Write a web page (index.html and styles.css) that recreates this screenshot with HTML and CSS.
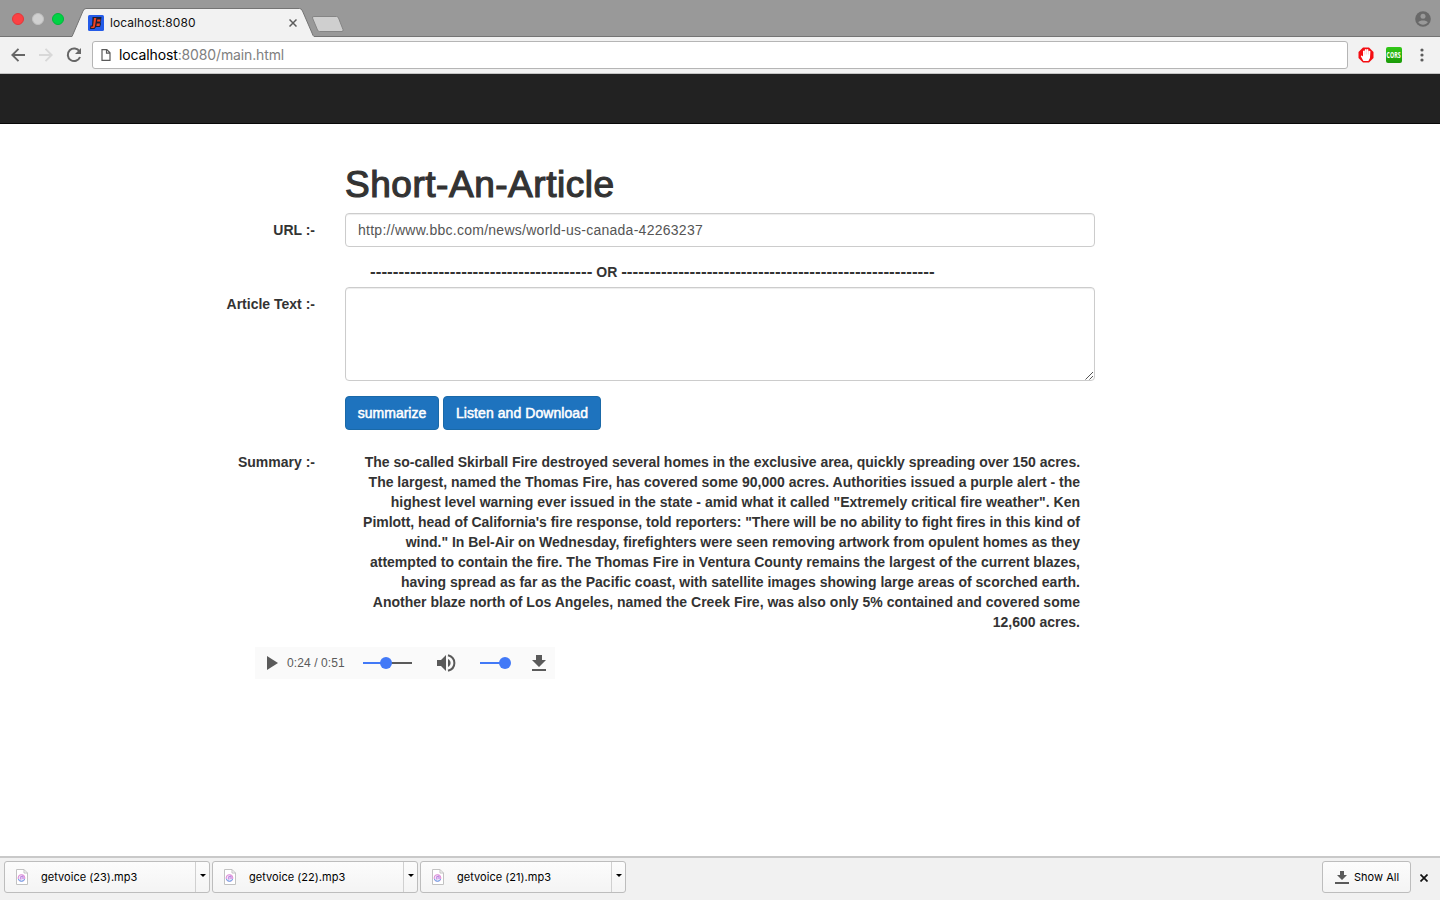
FILE: index.html
```
<!DOCTYPE html>
<html lang="en">
<head>
<meta charset="utf-8">
<title>localhost:8080</title>
<link rel="stylesheet" href="styles.css">
</head>
<body>
<header class="tabstrip">
  <div class="lights"><i class="light red"></i><i class="light gray"></i><i class="light green"></i></div>
  <div class="tab">
    <svg class="tab-shape" width="244" height="29" viewBox="0 0 244 29"><path d="M0 28.500 L2 24 11 3 Q12 .5 14 .5 H227.500 Q229.500 .5 230.500 3 L240 25 Q241 28 242 28.500 V29 H0Z" fill="#f2f2f2"/><path d="M0 28.500 L2 24 11 3 Q12 .5 14 .5 H227.500 Q229.500 .5 230.500 3 L240 25 Q241 28 242 28.500" fill="none" stroke="#747474"/></svg>
    <svg class="favicon" width="16" height="16" viewBox="0 0 16 16"><rect width="16" height="16" rx="1.500" fill="#245be8"/><path d="M4.500 2H13.500L13 6 12.500 7 13 9 12 12H8L6.500 14H2L2.500 10.500H4Z" fill="#1c2036"/><path d="M6 3H8.300L6.800 12 6 13H3L3.500 11.500H5ZM9.300 4.500H12.500L12.200 6.500H9ZM8.800 8.500H12L11.500 11H8.400Z" fill="#f5411f"/></svg>
    <span class="tab-title">localhost:8080</span>
    <svg class="tab-close" width="8" height="8" viewBox="0 0 8 8"><path d="M.5.5 7.500 7.500M7.500.5.5 7.500" stroke="#5c5c5c" stroke-width="1.500"/></svg>
  </div>
  <svg class="newtab" width="34" height="17" viewBox="0 0 34 17"><path d="M3 .5H25.500Q27 .5 27.500 2L32 13.500Q32.500 15.500 31 15.500H8.500Q7 15.500 6.500 14L1.500 2Q1 .5 3 .5Z" fill="#cfcfcf" stroke="#858585"/></svg>
  <svg class="profile" width="16" height="16" viewBox="0 0 16 16"><circle cx="8" cy="8" r="7.800" fill="#696969"/><circle cx="8" cy="5.200" r="2.500" fill="#999"/><path d="M3.200 11.300C4.500 8.800 11.500 8.800 12.800 11.300 10.800 14.600 5.200 14.600 3.200 11.300Z" fill="#999"/></svg>
</header>
<div class="toolbar">
  <svg class="nav" width="14" height="14" viewBox="0 0 14 14"><path d="M14 7H1.500M7.500.8 1.300 7 7.500 13.200" fill="none" stroke="#666" stroke-width="1.900"/></svg>
  <svg class="nav" width="14" height="14" viewBox="0 0 14 14"><path d="M0 7H12.500M6.500.8 12.700 7 6.500 13.200" fill="none" stroke="#d8d8d8" stroke-width="1.900"/></svg>
  <svg class="nav" width="16" height="16" viewBox="0 0 16 16"><path d="M13.500 4.500A6.300 6.300 0 1 0 14 10" fill="none" stroke="#666" stroke-width="2"/><path d="M15 1V7H9Z" fill="#666"/></svg>
  <div class="omnibox">
    <svg width="10" height="12" viewBox="0 0 10 12"><path d="M1 .6H5.800L9 3.800V11.400H1ZM5.500.6V4.100H9" fill="none" stroke="#5a5a5a" stroke-width="1.200"/></svg>
    <span class="address">localhost<span class="rest">:8080/main.html</span></span>
  </div>
  <svg class="ext adblock" width="16" height="16" viewBox="0 0 16 16"><path d="M5 .5H11L15.500 5V11L11 15.500H5L.5 11V5Z" fill="#f40d12"/><path d="M5.400 14 2.800 9.200Q3.300 8 4.600 9L5 9.800V4Q5.900 2.800 6.700 4L6.900 2.500Q7.600 1.300 8.400 2.500L8.900 2.500Q9.800 1.600 10.400 2.800V4.200L10.900 4Q11.900 3.300 12.400 4.300L12 11 10.400 14Z" fill="#fff"/><path d="M6.800 4V7.500M8.600 3V7.500M10.500 4V7.500" stroke="#f9a0a2" stroke-width=".4"/></svg>
  <span class="ext cors"><span class="cors-text">CORS</span></span>
  <svg class="dots" width="4" height="14" viewBox="0 0 4 14"><g fill="#5c5c5c"><circle cx="2" cy="2" r="1.600"/><circle cx="2" cy="7" r="1.600"/><circle cx="2" cy="12" r="1.600"/></g></svg>
</div>
<nav class="navbar"></nav>
<main class="container">
  <h1>Short-An-Article</h1>
  <div class="row"><label>URL :-</label><div class="control input">http://www.bbc.com/news/world-us-canada-42263237</div></div>
  <div class="or"><span class="dash">---------------------------------------</span> OR <span class="dash">-------------------------------------------------------</span></div>
  <div class="row"><label>Article Text :-</label><div class="control area"><svg class="grip" width="9" height="9" viewBox="0 0 9 9"><path d="M.5 8.500 8 1M4.500 8.500 8 5" stroke="#555" stroke-width="1"/></svg></div></div>
  <div class="buttons"><button class="b1">summarize</button><button class="b2">Listen and Download</button></div>
  <div class="row summary"><label>Summary :-</label>
    <div class="text"><span class="tight">The so-called Skirball Fire destroyed several homes in the exclusive area, quickly spreading over 150 acres.</span><br>The largest, named the Thomas Fire, has covered some 90,000 acres. Authorities issued a purple alert - the<br><span class="loose">highest level warning ever issued in the state - amid what it called "Extremely critical fire weather". Ken</span><br><span class="tight">Pimlott, head of California's fire response, told reporters: "There will be no ability to fight fires in this kind of</span><br>wind." In Bel-Air on Wednesday, firefighters were seen removing artwork from opulent homes as they<br><span class="loose">attempted to contain the fire. The Thomas Fire in Ventura County remains the largest of the current blazes,</span><br><span class="loose">having spread as far as the Pacific coast, with satellite images showing large areas of scorched earth.</span><br><span class="loose">Another blaze north of Los Angeles, named the Creek Fire, was also only 5% contained and covered some</span><br>12,600 acres.</div></div>
  <div class="player">
    <svg width="300" height="32" viewBox="0 0 300 32"><path d="M12 9V23L23 16Z" fill="#5a5a5a"/><path d="M108 16H157" stroke="#5a5a5a" stroke-width="2"/><path d="M108 16H131M225 16H250" stroke="#4279f7" stroke-width="2"/><circle cx="131" cy="16" r="6" fill="#4279f7"/><circle cx="250" cy="16" r="6" fill="#4279f7"/><path d="M182 13H186L191 8V24L186 19H182ZM193 12C196.500 13.500 196.500 18.500 193 20Z" fill="#5a5a5a"/><path d="M193 8.200C201.500 10.500 201.500 21.500 193 23.800" fill="none" stroke="#5a5a5a" stroke-width="2"/><path d="M281 8H287V13H291L284 20 277 13H281ZM277 22H291V24H277Z" fill="#5a5a5a"/></svg>
    <span class="time">0:24 / 0:51</span>
  </div>
</main>
<footer class="shelf">
  <div class="item"><svg class="file" width="12" height="16" viewBox="0 0 12 16"><path d="M.5.5H8L11.500 4V15.500H.5Z" fill="#fff" stroke="#c2c2c2"/><path d="M8 .5V4H11.500" fill="none" stroke="#c2c2c2"/><circle cx="5.500" cy="9" r="3.400" fill="#f0e6fa" stroke="#e08ad4"/><path d="M2.300 10A3.400 3.400 0 0 0 8.700 10" fill="none" stroke="#5cb6ee"/><path d="M4.800 10.500V7.500L7 7V10" fill="none" stroke="#b874dc"/></svg><span>getvoice (23).mp3</span><i class="caret"></i></div>
  <div class="item"><svg class="file" width="12" height="16" viewBox="0 0 12 16"><path d="M.5.5H8L11.500 4V15.500H.5Z" fill="#fff" stroke="#c2c2c2"/><path d="M8 .5V4H11.500" fill="none" stroke="#c2c2c2"/><circle cx="5.500" cy="9" r="3.400" fill="#f0e6fa" stroke="#e08ad4"/><path d="M2.300 10A3.400 3.400 0 0 0 8.700 10" fill="none" stroke="#5cb6ee"/><path d="M4.800 10.500V7.500L7 7V10" fill="none" stroke="#b874dc"/></svg><span>getvoice (22).mp3</span><i class="caret"></i></div>
  <div class="item"><svg class="file" width="12" height="16" viewBox="0 0 12 16"><path d="M.5.5H8L11.500 4V15.500H.5Z" fill="#fff" stroke="#c2c2c2"/><path d="M8 .5V4H11.500" fill="none" stroke="#c2c2c2"/><circle cx="5.500" cy="9" r="3.400" fill="#f0e6fa" stroke="#e08ad4"/><path d="M2.300 10A3.400 3.400 0 0 0 8.700 10" fill="none" stroke="#5cb6ee"/><path d="M4.800 10.500V7.500L7 7V10" fill="none" stroke="#b874dc"/></svg><span>getvoice (21).mp3</span><i class="caret"></i></div>
  <div class="showall"><svg width="14" height="14" viewBox="0 0 14 14"><path d="M5 1H9V5H12L7 10 2 5H5ZM0 12H14V14H0Z" fill="#5a5a5a"/></svg><span>Show All</span></div>
  <svg class="shelf-close" width="8" height="8" viewBox="0 0 8 8"><path d="M.5.5 7.500 7.500M7.500.5.5 7.500" stroke="#111" stroke-width="1.700"/></svg>
</footer>
</body>
</html>
```
FILE: styles.css
```
* { box-sizing: border-box; }
body { margin: 0; width: 1440px; height: 900px; overflow: hidden; display: flex; flex-direction: column; background: #fff; color: #333; font: 14px/20px "Liberation Sans", Arial, sans-serif; }
svg { display: block; flex: none; }
.tabstrip { height: 37px; flex: none; display: flex; align-items: flex-start; background: #999; border-bottom: 1px solid #747474; padding-right: 9px; }
.lights { display: flex; gap: 8px; padding: 13px 0 0 12px; width: 72px; }
.light { width: 12px; height: 12px; border-radius: 50%; }
.red { background: #fc4144; border: 1px solid #e1383a; }
.gray { background: #d0d0d0; border: 1px solid #c0c0c0; }
.green { background: #00d345; border: 1px solid #00b73a; }
.tab { position: relative; width: 243px; height: 29px; margin-top: 8px; display: flex; align-items: center; padding: 0 18px 0 16px; }
.tab-shape { position: absolute; left: 0; top: 0; }
.favicon { position: relative; margin-right: 6px; }
.tab-title { position: relative; flex: none; color: #111; font: 12px/16px Inter, sans-serif; letter-spacing: .06px; }
.tab-close { position: relative; margin-left: auto; }
.newtab { margin: 16px 0 0 -4px; }
.profile { margin: 11px 0 0 auto; }
.toolbar { height: 37px; flex: none; display: flex; align-items: center; background: #f2f2f2; border-bottom: 1px solid #c4c4c4; padding: 0 16px 0 11px; }
.nav { width: 14px; margin-right: 14px; }
.nav + .nav + .nav { width: 16px; margin: 0 10px 0 -1px; }
.omnibox { width: 1256px; height: 28px; flex: none; background: #fff; border: 1px solid #b5b5b5; border-radius: 3px; display: flex; align-items: center; padding-left: 8px; gap: 8px; }
.address { color: #000; font: 14px/20px Inter, sans-serif; letter-spacing: -.13px; }
.rest { color: #808080; }
.ext { width: 16px; height: 16px; flex: none; margin-left: 10px; }
.cors { margin-left: 12px; border-radius: 2px; background: linear-gradient(#32c818, #1b9a08); color: #fff; font: bold 8px/16px "Open Sans", sans-serif; display: flex; justify-content: center; }
.cors-text { transform: scaleX(.66); }
.dots { margin-left: 18px; }
.navbar { height: 50px; flex: none; background: #222; border-bottom: 1px solid #080808; }
.container { width: 1170px; margin: 0 auto; padding: 41px 15px 0; flex: 1; }
h1 { margin: 0 0 8px 195px; font-size: 37px; line-height: 40px; font-weight: 400; letter-spacing: .53px; -webkit-text-stroke: 1.2px #333; white-space: nowrap; }
.row { display: flex; gap: 30px; }
label { width: 165px; padding-top: 7px; font-weight: 700; text-align: right; white-space: nowrap; }
.control { width: 750px; border: 1px solid #ccc; border-radius: 4px; box-shadow: inset 0 1px 1px rgba(0,0,0,.075); color: #555; }
.input { height: 34px; padding: 6px 12px; letter-spacing: .265px; }
.area { height: 94px; display: flex; align-items: flex-end; justify-content: flex-end; }
.or { height: 20px; margin: 15px 0 5px 220px; font-weight: 700; white-space: pre; }
.dash { font-size: 17px; line-height: 1; letter-spacing: .04px; }
.buttons { display: flex; gap: 4px; margin: 15px 0 15px 195px; }
button { height: 34px; padding: 0; border: 1px solid #1a69a8; border-radius: 4px; background: #1e73be; color: #fff; font: 14px/20px "Liberation Sans", Arial, sans-serif; letter-spacing: .07px; -webkit-text-stroke: .5px #fff; white-space: nowrap; }
.b1 { width: 94px; letter-spacing: 0; }
.b2 { width: 158px; }
.text { width: 735px; padding-top: 7px; text-align: right; font-weight: 700; white-space: nowrap; }
.tight { letter-spacing: -.028px; }
.loose { letter-spacing: .013px; }
.player { position: relative; width: 300px; height: 32px; margin: 15px 0 0 105px; background: #fafafa; }
.time { position: absolute; left: 32px; top: 6px; font-size: 12px; letter-spacing: .1px; color: #5a5a5a; }
.shelf { height: 44px; flex: none; display: flex; background: #f1f1f1; border-top: 2px solid #c9c9c9; padding: 3px 12px 0 4px; gap: 2px; color: #000; font: 11px/16px Inter, sans-serif; letter-spacing: .03px; }
.item, .showall { height: 32px; border: 1px solid #bdbdbd; border-radius: 3px; background: linear-gradient(#fcfcfc, #f4f4f4); display: flex; align-items: center; }
.item { width: 206px; padding-left: 11px; gap: 13px; }
.caret { width: 14px; height: 30px; margin-left: auto; border-left: 1px solid #d0d0d0; display: flex; align-items: center; justify-content: center; padding-bottom: 3px; }
.caret::before { content: ""; border: 3px solid transparent; border-top: 3px solid #000; border-bottom: 0; }
.showall { width: 89px; margin-left: auto; padding-left: 12px; gap: 5px; }
.shelf-close { margin: 13px 0 0 7px; }
```
